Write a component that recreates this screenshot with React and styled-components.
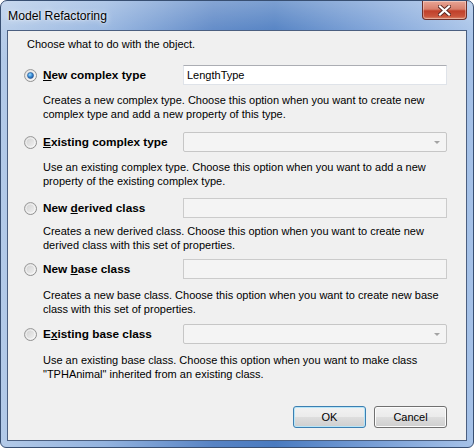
import React from 'react'
import styled, { createGlobalStyle, css } from 'styled-components'

const GlobalStyle = createGlobalStyle`
  html, body {
    margin: 0;
    padding: 0;
    background: #ffffff;
  }
  body {
    font-family: "Liberation Sans", Arial, sans-serif;
    font-size: 11px;
    color: #000;
  }
`

const Window = styled.div`
  width: 474px;
  height: 448px;
  box-sizing: border-box;
  border: 1px solid #384f72;
  border-radius: 7px 7px 6px 6px;
  background:
    linear-gradient(180deg, rgba(255, 255, 255, 0.28) 0px, rgba(255, 255, 255, 0.08) 29px, rgba(255, 255, 255, 0) 60px),
    linear-gradient(90deg, #b3cae8 0%, #93b3df 22%, #5783c4 45%, #4a7bc0 58%, #769dd5 78%, #a6c2e8 100%);
  display: flex;
  flex-direction: column;
  padding: 0 6px 6px;
  overflow: hidden;
`

const TitleBar = styled.div`
  height: 29px;
  display: flex;
  align-items: flex-start;
`

const Title = styled.div`
  align-self: center;
  padding-left: 1px;
  font-size: 12.2px;
  color: #000;
  text-shadow: 0 0 6px rgba(255, 255, 255, 0.9), 0 0 2px rgba(255, 255, 255, 0.8);
`

const CloseButton = styled.div`
  margin-left: auto;
  margin-right: 0;
  width: 45px;
  height: 19px;
  box-sizing: border-box;
  border: 1px solid #6b2f2a;
  border-top: none;
  border-radius: 0 0 4px 4px;
  background: linear-gradient(180deg, #e8a595 0%, #d8806d 45%, #c0402a 55%, #c9543c 85%, #dc8a6e 100%);
  box-shadow: inset 0 0 0 1px rgba(255, 255, 255, 0.35);
  display: flex;
  align-items: center;
  justify-content: center;
`

const Client = styled.div`
  flex: 1;
  background: #f0f0f0;
  border: 1px solid #4b5f80;
  display: flex;
  flex-direction: column;
  padding: 0 19px 12px 16px;
`

const Intro = styled.div`
  margin-top: 6px;
  padding-left: 3px;
  line-height: 14px;
`

const Row = styled.div`
  margin-top: ${p => p.$top}px;
  height: 20px;
  display: flex;
  align-items: center;
`

const RadioBox = styled.div`
  width: 13px;
  height: 13px;
  margin-right: 6px;
  display: flex;
`

const Label = styled.div`
  width: 140px;
  font-weight: bold;
  font-size: 11.8px;

  u {
    text-decoration: underline;
    text-underline-offset: 1px;
  }
`

const fieldBase = css`
  width: 264px;
  height: 20px;
  box-sizing: border-box;
  display: flex;
  align-items: center;
`

const TextField = styled.div`
  ${fieldBase}
  padding-left: 3px;
  ${p => p.$disabled
    ? css`
        background: #f4f4f4;
        border: 1px solid #cbcbcb;
      `
    : css`
        background: #ffffff;
        border: 1px solid #dfe3e9;
        border-top-color: #abadb3;
      `}
`

const Combo = styled.div`
  ${fieldBase}
  justify-content: flex-end;
  padding-right: 6px;
  background: #f4f4f4;
  border: 1px solid #c6c6c6;
  border-radius: 2px;
`

const Arrow = styled.div`
  width: 0;
  height: 0;
  border-left: 3px solid transparent;
  border-right: 3px solid transparent;
  border-top: 3px solid #a3a3a3;
`

const Desc = styled.div`
  margin-top: ${p => p.$top}px;
  padding-left: 19px;
  line-height: 14px;
  white-space: pre-line;
`

const ButtonRow = styled.div`
  margin-top: auto;
  display: flex;
  justify-content: flex-end;
  gap: 8px;
`

const Button = styled.div`
  width: 73px;
  height: 22px;
  box-sizing: border-box;
  border-radius: 3px;
  display: flex;
  align-items: center;
  justify-content: center;
  font-size: 11px;
  background: linear-gradient(180deg, #f2f2f2 0%, #ebebeb 48%, #dddddd 52%, #cfcfcf 100%);
  border: 1px solid ${p => (p.$default ? '#3c7fb1' : '#707070')};
  box-shadow: inset 0 0 0 1px ${p => (p.$default ? '#b7e5f8' : '#fcfcfc')};
`

const Radio = ({ checked }) => (
  <RadioBox>
    <svg width="13" height="13" viewBox="0 0 13 13">
      <defs>
        <linearGradient id="rRing" x1="0" y1="0" x2="1" y2="1">
          <stop offset="0" stopColor="#a2a2a2" />
          <stop offset="1" stopColor="#8a8a8a" />
        </linearGradient>
        <linearGradient id="rFill" x1="0" y1="0" x2="1" y2="1">
          <stop offset="0" stopColor="#cdcdcd" />
          <stop offset="1" stopColor="#f6f6f6" />
        </linearGradient>
        <radialGradient id="rDot" cx="0.4" cy="0.35" r="0.7">
          <stop offset="0" stopColor="#9fe0ff" />
          <stop offset="0.5" stopColor="#3c8fd8" />
          <stop offset="1" stopColor="#1a4f96" />
        </radialGradient>
      </defs>
      <circle cx="6.5" cy="6.5" r="6" fill="url(#rFill)" stroke="url(#rRing)" strokeWidth="1" />
      <circle cx="6.5" cy="6.5" r="4.5" fill="none" stroke="#ffffff" strokeOpacity="0.6" strokeWidth="1" />
      {checked && <circle cx="6.5" cy="6.5" r="3" fill="url(#rDot)" stroke="#2a5c9c" strokeWidth="0.6" />}
    </svg>
  </RadioBox>
)

const CloseIcon = () => (
  <svg width="13" height="11" viewBox="0 0 13 11">
    <path d="M2 1.5 L11 9.5 M11 1.5 L2 9.5" stroke="#5a2a25" strokeWidth="4" strokeLinecap="square" />
    <path d="M2 1.5 L11 9.5 M11 1.5 L2 9.5" stroke="#ffffff" strokeWidth="2.2" strokeLinecap="square" />
  </svg>
)

const options = [
  {
    label: <><u>N</u>ew complex type</>,
    field: 'text',
    value: 'LengthType',
    checked: true,
    rowTop: 14,
    descTop: 8,
    desc: 'Creates a new complex type. Choose this option when you want to create new\ncomplex type and add a new property of this type.',
  },
  {
    label: <><u>E</u>xisting complex type</>,
    field: 'combo',
    rowTop: 11,
    descTop: 8,
    desc: 'Use an existing complex type. Choose this option when you want to add a new\nproperty of the existing complex type.',
  },
  {
    label: <>New <u>d</u>erived class</>,
    field: 'text',
    disabled: true,
    rowTop: 10,
    descTop: 6,
    desc: 'Creates a new derived class. Choose this option when you want to create new\nderived class with this set of properties.',
  },
  {
    label: <>New <u>b</u>ase class</>,
    field: 'text',
    disabled: true,
    rowTop: 7,
    descTop: 9,
    desc: 'Creates a new base class. Choose this option when you want to create new base\nclass with this set of properties.',
  },
  {
    label: <>E<u>x</u>isting base class</>,
    field: 'combo',
    rowTop: 8,
    descTop: 9,
    desc: 'Use an existing base class. Choose this option when you want to make class\n"TPHAnimal" inherited from an existing class.',
  },
]

const App = () => (
  <>
    <GlobalStyle />
    <Window>
      <TitleBar>
        <Title>Model Refactoring</Title>
        <CloseButton>
          <CloseIcon />
        </CloseButton>
      </TitleBar>
      <Client>
        <Intro>Choose what to do with the object.</Intro>
        {options.map((o, i) => (
          <React.Fragment key={i}>
            <Row $top={o.rowTop}>
              <Radio checked={o.checked} />
              <Label>{o.label}</Label>
              {o.field === 'combo' ? (
                <Combo>
                  <Arrow />
                </Combo>
              ) : (
                <TextField $disabled={o.disabled}>{o.value}</TextField>
              )}
            </Row>
            <Desc $top={o.descTop}>{o.desc}</Desc>
          </React.Fragment>
        ))}
        <ButtonRow>
          <Button $default>OK</Button>
          <Button>Cancel</Button>
        </ButtonRow>
      </Client>
    </Window>
  </>
)

export default App
